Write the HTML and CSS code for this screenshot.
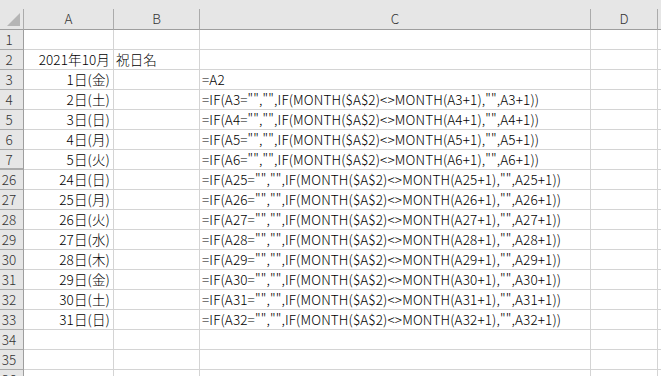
FILE: index.html
```html
<!DOCTYPE html>
<html lang="ja">
<head>
    <meta charset="UTF-8">
    <title>Sheet1</title>
    <link rel="stylesheet" href="styles.css">
</head>
<body>
    <div class="sheet">
        <div class="row head">
            <div class="corner"><span class="tri"></span></div>
            <div class="col">A</div>
            <div class="col">B</div>
            <div class="col">C</div>
            <div class="col">D</div>
            <div class="col last"></div>
        </div>

        <div class="row"><div class="num">1</div><div class="cell"></div><div class="cell"></div><div class="cell"></div><div class="cell"></div><div class="cell"></div></div>
        <div class="row"><div class="num">2</div><div class="cell r">2021年10月</div><div class="cell">祝日名</div><div class="cell"></div><div class="cell"></div><div class="cell"></div></div>
        <div class="row"><div class="num">3</div><div class="cell r">1日(金)</div><div class="cell"></div><div class="cell">=A2</div><div class="cell"></div><div class="cell"></div></div>
        <div class="row"><div class="num">4</div><div class="cell r">2日(土)</div><div class="cell"></div><div class="cell">=IF(A3="","",IF(MONTH($A$2)&lt;&gt;MONTH(A3+1),"",A3+1))</div><div class="cell"></div><div class="cell"></div></div>
        <div class="row"><div class="num">5</div><div class="cell r">3日(日)</div><div class="cell"></div><div class="cell">=IF(A4="","",IF(MONTH($A$2)&lt;&gt;MONTH(A4+1),"",A4+1))</div><div class="cell"></div><div class="cell"></div></div>
        <div class="row"><div class="num">6</div><div class="cell r">4日(月)</div><div class="cell"></div><div class="cell">=IF(A5="","",IF(MONTH($A$2)&lt;&gt;MONTH(A5+1),"",A5+1))</div><div class="cell"></div><div class="cell"></div></div>
        <div class="row"><div class="num hidden-after">7</div><div class="cell r">5日(火)</div><div class="cell"></div><div class="cell">=IF(A6="","",IF(MONTH($A$2)&lt;&gt;MONTH(A6+1),"",A6+1))</div><div class="cell"></div><div class="cell"></div></div>
        <div class="row"><div class="num">26</div><div class="cell r">24日(日)</div><div class="cell"></div><div class="cell">=IF(A25="","",IF(MONTH($A$2)&lt;&gt;MONTH(A25+1),"",A25+1))</div><div class="cell"></div><div class="cell"></div></div>
        <div class="row"><div class="num">27</div><div class="cell r">25日(月)</div><div class="cell"></div><div class="cell">=IF(A26="","",IF(MONTH($A$2)&lt;&gt;MONTH(A26+1),"",A26+1))</div><div class="cell"></div><div class="cell"></div></div>
        <div class="row"><div class="num">28</div><div class="cell r">26日(火)</div><div class="cell"></div><div class="cell">=IF(A27="","",IF(MONTH($A$2)&lt;&gt;MONTH(A27+1),"",A27+1))</div><div class="cell"></div><div class="cell"></div></div>
        <div class="row"><div class="num">29</div><div class="cell r">27日(水)</div><div class="cell"></div><div class="cell">=IF(A28="","",IF(MONTH($A$2)&lt;&gt;MONTH(A28+1),"",A28+1))</div><div class="cell"></div><div class="cell"></div></div>
        <div class="row"><div class="num">30</div><div class="cell r">28日(木)</div><div class="cell"></div><div class="cell">=IF(A29="","",IF(MONTH($A$2)&lt;&gt;MONTH(A29+1),"",A29+1))</div><div class="cell"></div><div class="cell"></div></div>
        <div class="row"><div class="num">31</div><div class="cell r">29日(金)</div><div class="cell"></div><div class="cell">=IF(A30="","",IF(MONTH($A$2)&lt;&gt;MONTH(A30+1),"",A30+1))</div><div class="cell"></div><div class="cell"></div></div>
        <div class="row"><div class="num">32</div><div class="cell r">30日(土)</div><div class="cell"></div><div class="cell">=IF(A31="","",IF(MONTH($A$2)&lt;&gt;MONTH(A31+1),"",A31+1))</div><div class="cell"></div><div class="cell"></div></div>
        <div class="row"><div class="num">33</div><div class="cell r">31日(日)</div><div class="cell"></div><div class="cell">=IF(A32="","",IF(MONTH($A$2)&lt;&gt;MONTH(A32+1),"",A32+1))</div><div class="cell"></div><div class="cell"></div></div>
        <div class="row"><div class="num">34</div><div class="cell"></div><div class="cell"></div><div class="cell"></div><div class="cell"></div><div class="cell"></div></div>
        <div class="row"><div class="num">35</div><div class="cell"></div><div class="cell"></div><div class="cell"></div><div class="cell"></div><div class="cell"></div></div>
        <div class="row"><div class="num">36</div><div class="cell"></div><div class="cell"></div><div class="cell"></div><div class="cell"></div><div class="cell"></div></div>
    </div>
</body>
</html>
```

FILE: styles.css
```css
body {
    margin: 0;
    background: #fff;
    font-family: "Noto Sans CJK JP", "Noto Sans", sans-serif;
    font-size: 13.5px;
    font-weight: 300;
    color: #000;
    overflow: hidden;
    height: 376px;
}

.sheet {
    width: 661px;
}

.row {
    display: grid;
    grid-template-columns: 24px 90px 86px 391px 67px 1fr;
    height: 20px;
}

/* column header strip */
.row.head {
    height: 30px;
    background: #e6e6e6;
    padding-top: 9px;
    box-sizing: border-box;
}

.corner,
.col {
    border-right: 1px solid #ababab;
    border-bottom: 1px solid #9e9e9e;
    position: relative;
}

.col {
    text-align: center;
    line-height: 19px;
    color: #333;
}

.col.last {
    border-right: none;
}

.tri {
    position: absolute;
    right: 3px;
    bottom: 3px;
    width: 0;
    height: 0;
    border-left: 13px solid transparent;
    border-bottom: 13px solid #b5b5b5;
}

/* row numbers */
.num {
    background: #e6e6e6;
    border-right: 1px solid #9e9e9e;
    border-bottom: 1px solid #ababab;
    color: #333;
    text-align: center;
    padding-right: 5px;
    line-height: 19px;
}

.num.hidden-after {
    box-shadow: inset 0 -1px #ababab;
}

.cell {
    border-right: 1px solid #d4d4d4;
    border-bottom: 1px solid #d4d4d4;
    line-height: 19px;
    padding: 0 2px;
    white-space: nowrap;
    letter-spacing: 0.13px;
}

.cell.r {
    text-align: right;
    padding-right: 3px;
}
```
